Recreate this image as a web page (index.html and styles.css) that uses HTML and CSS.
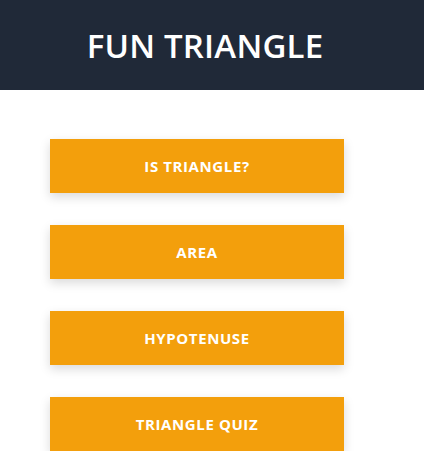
FILE: index.html
```html
<!DOCTYPE html>
<html>
<head>
<meta charset="utf-8">
<link rel="stylesheet" href="styles.css">
</head>
<body>
<header class="top">
  <h1 class="title">FUN TRIANGLE</h1>
</header>
<main class="menu">
  <a class="btn">IS TRIANGLE?</a>
  <a class="btn">AREA</a>
  <a class="btn">HYPOTENUSE</a>
  <a class="btn">TRIANGLE QUIZ</a>
</main>
</body>
</html>
```
FILE: styles.css
```css
html, body {
  margin: 0;
  padding: 0;
  background: #ffffff;
  font-family: "Open Sans", "Noto Sans", sans-serif;
}
.top {
  background: #202938;
  height: 90px;
  display: flex;
  align-items: center;
  justify-content: center;
  padding-right: 14px;
}
.title {
  margin: 0;
  color: #ffffff;
  font-size: 33px;
  font-weight: 600;
  letter-spacing: 0.2px;
}
.menu {
  display: flex;
  flex-direction: column;
  gap: 32px;
  padding: 49px 0 0 50px;
}
.btn {
  width: 294px;
  height: 54px;
  background: #f39f0c;
  color: #ffffff;
  font-size: 15px;
  font-weight: 700;
  letter-spacing: 0.6px;
  display: flex;
  align-items: center;
  justify-content: center;
  box-shadow: 0 4px 10px rgba(0, 0, 0, 0.15);
}
```
